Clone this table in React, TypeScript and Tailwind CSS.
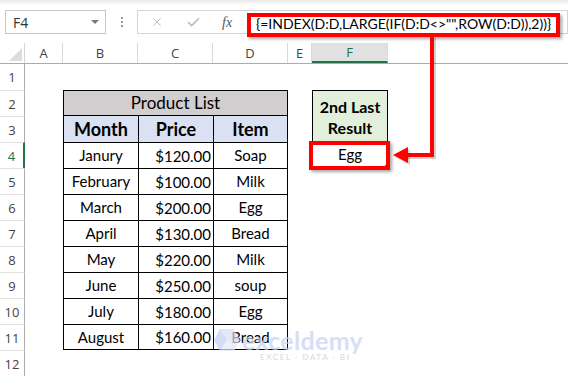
import React from 'react';
import { X, Check } from 'lucide-react';

const data = [
  { month: 'Janury', price: '$120.00', item: 'Soap' },
  { month: 'February', price: '$100.00', item: 'Milk' },
  { month: 'March', price: '$200.00', item: 'Egg' },
  { month: 'April', price: '$130.00', item: 'Bread' },
  { month: 'May', price: '$220.00', item: 'Milk' },
  { month: 'June', price: '$250.00', item: 'soup' },
  { month: 'July', price: '$180.00', item: 'Egg' },
  { month: 'August', price: '$160.00', item: 'Bread' },
];

// full class names so tailwind picks them up
const rowStart = [
  '',
  'row-start-1',
  'row-start-2',
  'row-start-3',
  'row-start-4',
  'row-start-5',
  'row-start-6',
  'row-start-7',
  'row-start-8',
  'row-start-9',
  'row-start-10',
  'row-start-11',
  'row-start-12',
];

const columns = [
  { label: 'A', w: 'w-[38px]' },
  { label: 'B', w: 'w-[75px]' },
  { label: 'C', w: 'w-[75px]' },
  { label: 'D', w: 'w-[75px]' },
  { label: 'E', w: 'w-[24px]' },
  { label: 'F', w: 'w-[76px]' },
];

export default function App() {
  return (
    <div className="relative w-[568px] h-[377px] overflow-hidden bg-white font-['Lato',sans-serif] text-black">
      {/* Formula bar */}
      <div className="flex items-start h-[43px] pt-[10px] pl-[5px] bg-[linear-gradient(#e9e9e9,#ffffff_5px)]">
        <div className="flex items-center justify-between w-[101px] h-[24px] border border-[#c6c6c6] bg-white pl-[7px] pr-[6px]">
          <span className="font-['Open_Sans',sans-serif] text-[14px] text-[#333]">F4</span>
          <span className="w-0 h-0 border-l-[4px] border-r-[4px] border-t-[4px] border-l-transparent border-r-transparent border-t-[#777]" />
        </div>
        <div className="flex flex-col items-center justify-center gap-[2px] w-[31px] h-[24px]">
          <span className="w-[2px] h-[2px] bg-[#9a9a9a]" />
          <span className="w-[2px] h-[2px] bg-[#9a9a9a]" />
          <span className="w-[2px] h-[2px] bg-[#9a9a9a]" />
        </div>
        <div className="flex items-center flex-1 h-[24px] border border-[#d4d4d4] bg-white">
          <div className="flex items-center w-[109px] h-full">
            <X className="ml-[12px] w-[14px] h-[14px] text-[#b8b8b8]" strokeWidth={1.5} />
            <Check className="ml-[22px] w-[15px] h-[15px] text-[#b8b8b8]" strokeWidth={2.5} />
            <span className="ml-[21px] font-['Liberation_Serif',serif] italic text-[14px] text-[#555]">fx</span>
          </div>
          <div className="pl-[9px] pt-[2px] text-[14px] text-black whitespace-nowrap">
            {'{=INDEX(D:D,LARGE(IF(D:D<>"",ROW(D:D)),2))}'}
          </div>
        </div>
      </div>

      {/* Column headers */}
      <div className="flex h-[21px] border-b border-[#ababab] font-['Open_Sans',sans-serif] text-[13px] text-[#444]">
        <div className="relative w-[25px] border-r border-[#d4d4d4]">
          <svg className="absolute left-[9px] top-[5px]" width="13" height="13" viewBox="0 0 13 13">
            <polygon points="13,0 13,13 0,13" fill="#dcdcdc" />
          </svg>
        </div>
        {columns.map((c) => (
          <div
            key={c.label}
            className={`${c.w} flex items-center justify-center pt-[2px] border-r border-[#d9d9d9] ${
              c.label === 'F' ? 'bg-[#e1e1e1] text-[#217346] border-b-2 border-b-[#217346]' : ''
            }`}
          >
            {c.label}
          </div>
        ))}
        <div className="flex-1" />
      </div>

      {/* Sheet body */}
      <div className="grid grid-cols-[25px_38px_75px_75px_75px_24px_76px_1fr] auto-rows-[26px]">
        {Array.from({ length: 12 }, (_, i) => i + 1).map((r) => (
          <div
            key={'h' + r}
            className={`${rowStart[r]} col-start-1 flex items-center justify-center pt-[2px] font-['Open_Sans',sans-serif] text-[13px] ${
              r > 1 ? 'border-t border-t-[#e1e1e1]' : ''
            } ${
              r === 4
                ? 'text-[#217346] border-r-2 border-r-[#217346]'
                : 'text-[#444] border-r border-r-[#ababab]'
            }`}
          >
            {r}
          </div>
        ))}

        {/* Product List title */}
        <div className="row-start-2 col-start-3 col-span-3 flex items-center justify-center bg-[#d0cece] border border-black text-[17px]">
          Product List
        </div>

        {/* Header row */}
        <div className="row-start-3 col-start-3 flex items-center justify-center bg-[#d9e1f2] border-l border-black font-bold text-[18px]">
          Month
        </div>
        <div className="row-start-3 col-start-4 flex items-center justify-center bg-[#d9e1f2] border-l border-black font-bold text-[18px]">
          Price
        </div>
        <div className="row-start-3 col-start-5 flex items-center justify-center bg-[#d9e1f2] border-l border-r border-black font-bold text-[18px]">
          Item
        </div>

        {data.map((d, i) => {
          const r = i + 4;
          const last = i === data.length - 1 ? 'border-b' : '';
          return (
            <React.Fragment key={d.month}>
              <div className={`${rowStart[r]} col-start-3 flex items-center justify-center border-l border-t border-black ${last} text-[15px]`}>
                {d.month}
              </div>
              <div className={`${rowStart[r]} col-start-4 flex items-end justify-end pr-[2px] pb-[1px] border-l border-t border-black ${last} text-[15px]`}>
                {d.price}
              </div>
              <div className={`${rowStart[r]} col-start-5 flex items-center justify-center border-l border-t border-r border-black ${last} text-[15px]`}>
                {d.item}
              </div>
            </React.Fragment>
          );
        })}

        {/* Result block */}
        <div className="row-start-2 row-span-2 col-start-7 flex flex-col items-center justify-center bg-[#e2efda] border border-black font-bold text-[16px] leading-[21px] pt-[2px]">
          <span>2nd Last</span>
          <span>Result</span>
        </div>
        <div className="relative row-start-4 col-start-7 flex items-center justify-center border-b-2 border-[#217346] text-[15px]">
          Egg
          <span className="absolute right-[0px] bottom-[-2px] w-[3px] h-[3px] bg-[#217346]" />
        </div>
      </div>

      {/* Annotation: red boxes and arrow */}
      <div className="absolute left-[247px] top-[13px] w-[313px] h-[24px] border-[4px] border-[#ff0000] shadow-[2px_2px_3px_rgba(0,0,0,0.35)]" />
      <div className="absolute left-[309px] top-[141px] w-[81px] h-[29px] border-[4px] border-[#ff0000] shadow-[2px_2px_3px_rgba(0,0,0,0.35)]" />
      <svg className="absolute left-0 top-0 pointer-events-none" width="568" height="377">
        <g fill="none" stroke="rgba(0,0,0,0.18)" strokeWidth="4">
          <polyline points="434,38 434,157 406,157" />
        </g>
        <polygon points="395,157 410,149 410,165" fill="rgba(0,0,0,0.18)" />
        <g fill="none" stroke="#ff0000" strokeWidth="4">
          <polyline points="432,36 432,155 404,155" />
        </g>
        <polygon points="393,155 408,147 408,163" fill="#ff0000" />
      </svg>

      {/* Watermark */}
      <div className="absolute left-[213px] top-[328px] flex items-start gap-[1px] opacity-70 pointer-events-none">
        <svg width="28" height="24" viewBox="0 0 28 24">
          <polygon points="7,1 21,1 27,12 21,23 7,23 1,12" fill="#d6dff6" />
          <polygon points="7,1 14,12 7,23 1,12" fill="#c2d0f1" />
          <polygon points="14,12 27,12 21,23 7,23" fill="#e3e9f9" />
        </svg>
        <div className="flex flex-col items-start">
          <span className="font-bold text-[25px] leading-[24px] text-[#c5d2f1] tracking-[0.3px]">exceldemy</span>
          <span className="ml-[18px] text-[8px] leading-[10px] tracking-[1.6px] text-[#c9c9c9]">EXCEL · DATA · BI</span>
        </div>
      </div>
    </div>
  );
}
